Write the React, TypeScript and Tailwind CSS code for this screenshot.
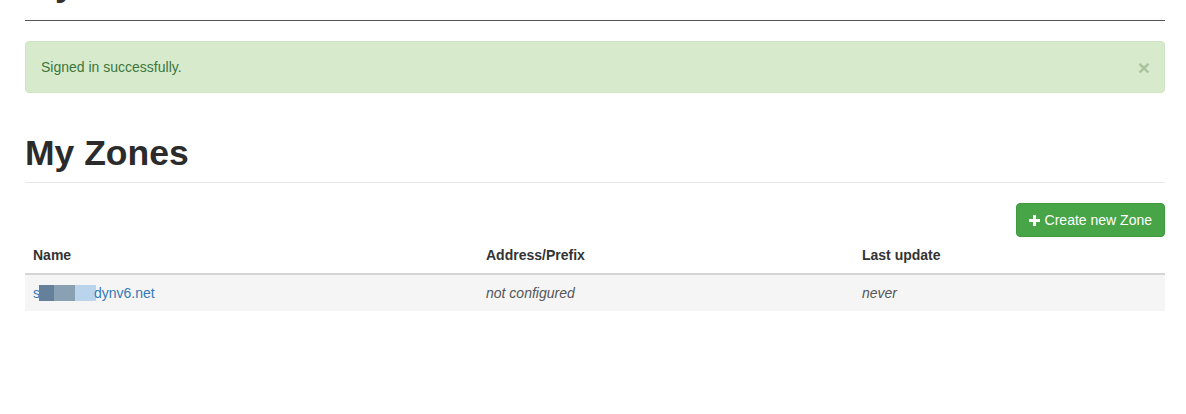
export default function App() {
  return (
    <div className="min-h-screen bg-white text-[14px] leading-[20px] text-[#333] font-['Liberation_Sans',Arial,sans-serif]">
      <div className="w-[1140px] ml-[25px]">
        {/* previous page header, scrolled off the top */}
        <div className="h-[21px] overflow-hidden border-b border-[#555]">
          <h1 className="mt-[-35px] text-[36px] leading-[36px] font-bold text-[#333]">My Account</h1>
        </div>

        {/* flash message */}
        <div className="mt-[20px] flex items-center justify-between h-[52px] px-[15px] rounded-[4px] border border-[#cde5c0] bg-[#d7ebcc] text-[#3c763d]">
          <span>Signed in successfully.</span>
          <span className="text-[21px] font-bold leading-none text-[#a9c39f] mr-[-1px]">×</span>
        </div>

        {/* page header */}
        <div className="mt-[41px] pb-[9px] border-b border-[#e7e7e7]">
          <h1 className="text-[35.5px] leading-[39px] font-bold text-[#2b2b2b]">My Zones</h1>
        </div>

        <div className="mt-[20px] flex justify-end">
          <button className="flex items-center gap-[4px] h-[34px] px-[12px] rounded-[4px] border border-[#40983f] bg-[#47a447] text-white">
            <svg width="11" height="11" viewBox="0 0 11 11" className="mr-[1px]">
              <rect x="4" y="0" width="3" height="11" fill="white" />
              <rect x="0" y="4" width="11" height="3" fill="white" />
            </svg>
            <span>Create new Zone</span>
          </button>
        </div>

        <table className="w-full border-collapse">
          <thead>
            <tr className="border-b-2 border-[#d5d5d5] text-left">
              <th className="w-[453px] p-[8px] font-bold">Name</th>
              <th className="w-[376px] p-[8px] font-bold">Address/Prefix</th>
              <th className="p-[8px] font-bold">Last update</th>
            </tr>
          </thead>
          <tbody>
            <tr className="bg-[#f5f5f5]">
              <td className="p-[8px]">
                <a className="flex items-center text-[#337ab7]">
                  <span>s</span>
                  <span className="flex h-[16px] ml-[-1px] mr-[0px]">
                    <span className="w-[15px] bg-[#64809a]" />
                    <span className="w-[21px] bg-[#8aa0b3]" />
                    <span className="w-[21px] bg-[#b9d4ec]" />
                  </span>
                  <span className="ml-[-2px]">dynv6.net</span>
                </a>
              </td>
              <td className="p-[8px] italic text-[#555]">not configured</td>
              <td className="p-[8px] italic text-[#555]">never</td>
            </tr>
          </tbody>
        </table>
      </div>
    </div>
  );
}
